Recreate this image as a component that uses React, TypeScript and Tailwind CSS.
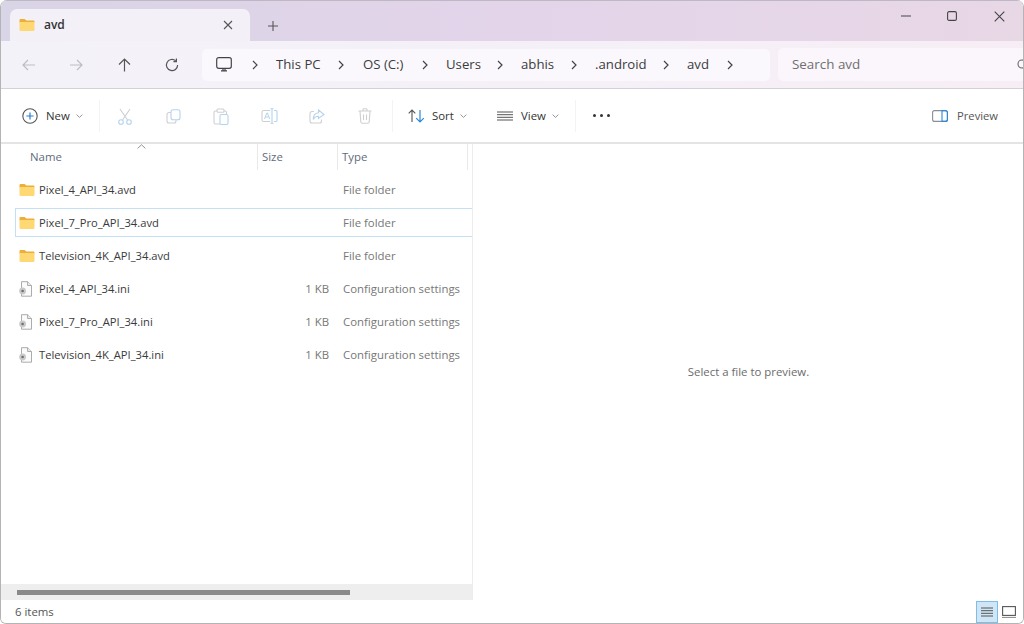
import React from "react";

const Folder = () => (
  <svg width="16" height="14" viewBox="0 0 16 14" className="shrink-0">
    <path d="M0.5 2.2C0.5 1.4 1 1 1.7 1H5.6L7.3 2.6H14.4C15.1 2.6 15.5 3 15.5 3.7V4.5H0.5Z" fill="#ecb03a" />
    <path d="M0.5 4H15.5V11.8C15.5 12.5 15.1 13 14.4 13H1.6C1 13 0.5 12.5 0.5 11.8Z" fill="#fdd873" />
  </svg>
);

const IniFile = () => (
  <svg width="15" height="16" viewBox="0 0 15 16" className="shrink-0 -ml-px">
    <path d="M3.5 0.7H9.6L13.5 4.5V15.2H3.5Z" fill="#fbfbfb" stroke="#a3a3a3" strokeWidth="0.9" />
    <path d="M9.6 0.7V4.5H13.5" fill="#eee" stroke="#a3a3a3" strokeWidth="0.9" />
    <circle cx="4.6" cy="10" r="3.4" fill="#c9c9c9" />
    <circle cx="4.6" cy="10" r="1.3" fill="#6e6e6e" />
  </svg>
);

const Chevron = () => (
  <svg width="6" height="10" viewBox="0 0 6 10" className="shrink-0">
    <path d="M1 1l4 4-4 4" fill="none" stroke="#444" strokeWidth="1.2" />
  </svg>
);

const Caret = () => (
  <svg width="7" height="4" viewBox="0 0 7 4" className="shrink-0">
    <path d="M0.6 0.6L3.5 3.4 6.4 0.6" fill="none" stroke="#888" strokeWidth="0.9" />
  </svg>
);

const Sep = () => <div className="w-px h-[32px] bg-[#f3f3f3] shrink-0" />;

const ToolSlot = ({ children }: { children: React.ReactNode }) => (
  <div className="w-[48px] h-full flex items-center justify-center shrink-0">{children}</div>
);

const G = "#cfcfcf";
const B = "#b3d4ee";

const Crumb = ({ label, w }: { label: string; w: string }) => (
  <div className={`flex items-center shrink-0 ${w}`}>
    <span className="text-[13.2px] text-[#3c3c3c] whitespace-nowrap">{label}</span>
  </div>
);

const rows = [
  { name: "Pixel_4_API_34.avd", size: "", type: "File folder", folder: true },
  { name: "Pixel_7_Pro_API_34.avd", size: "", type: "File folder", folder: true, sel: true },
  { name: "Television_4K_API_34.avd", size: "", type: "File folder", folder: true },
  { name: "Pixel_4_API_34.ini", size: "1 KB", type: "Configuration settings" },
  { name: "Pixel_7_Pro_API_34.ini", size: "1 KB", type: "Configuration settings" },
  { name: "Television_4K_API_34.ini", size: "1 KB", type: "Configuration settings" },
];

export default function App() {
  return (
    <div className="w-[1024px] h-[624px] flex flex-col overflow-hidden bg-white border-l border-r border-b border-[#b4b4b4] rounded-t-[7px] rounded-b-[6px] font-['Open_Sans',sans-serif] text-[11.4px] leading-none">
      {/* Title bar */}
      <div className="h-[41px] shrink-0 flex bg-linear-to-r from-[#d9d4e6] via-[#e3d4ea] to-[#e8d8e6] border-t border-[#bdb8c4]">
        <div className="ml-[9px] mt-[8px] w-[240px] h-[32px] bg-[#f3f0f8] rounded-t-[7px] flex items-center">
          <div className="ml-[9px]"><Folder /></div>
          <span className="ml-[9px] w-[21px] text-[12px] font-semibold text-[#333]">avd</span>
          <svg width="10" height="10" viewBox="0 0 10 10" className="ml-[158px]">
            <path d="M1 1l8 8M9 1l-8 8" stroke="#555" strokeWidth="1.1" />
          </svg>
        </div>
        <svg width="10" height="10" viewBox="0 0 10 10" className="ml-[18px] mt-[20px]">
          <path d="M5 0v10M0 5h10" stroke="#555" strokeWidth="1.1" />
        </svg>
        <div className="ml-auto mt-[10px] flex items-start">
          <svg width="10" height="10" viewBox="0 0 10 10">
            <path d="M0 5h10" stroke="#555" strokeWidth="1.1" />
          </svg>
          <svg width="10" height="10" viewBox="0 0 10 10" className="ml-[36px]">
            <rect x="0.6" y="0.6" width="8.8" height="8.8" rx="1.5" fill="none" stroke="#444" strokeWidth="1.1" />
          </svg>
          <svg width="11" height="11" viewBox="0 0 11 11" className="ml-[37px] mr-[18px]">
            <path d="M0.7 0.7l9.6 9.6M10.3 0.7l-9.6 9.6" stroke="#444" strokeWidth="1.1" />
          </svg>
        </div>
      </div>

      {/* Navigation bar */}
      <div className="h-[48px] shrink-0 flex items-center bg-linear-to-r from-[#f4f2f9] via-[#f5f0f8] to-[#f7eef5] border-b border-[#d4d2d6]">
        <div className="w-[201px] shrink-0 flex items-center">
          <svg width="14" height="12" viewBox="0 0 14 12" className="ml-[21px]">
            <path d="M13 6H1M6 1L1 6l5 5" fill="none" stroke="#bdbdc4" strokeWidth="1.2" />
          </svg>
          <svg width="14" height="12" viewBox="0 0 14 12" className="ml-[33px]">
            <path d="M1 6h12M8 1l5 5-5 5" fill="none" stroke="#bdbdc4" strokeWidth="1.2" />
          </svg>
          <svg width="13" height="14" viewBox="0 0 13 14" className="ml-[35px]">
            <path d="M6.5 13.5V1M1 6.5L6.5 1 12 6.5" fill="none" stroke="#555" strokeWidth="1.2" />
          </svg>
          <svg width="14" height="14" viewBox="0 0 14 14" className="ml-[34px]">
            <path d="M12.6 7A5.6 5.6 0 1 1 10.7 2.8" fill="none" stroke="#555" strokeWidth="1.2" />
            <path d="M11.4 0.6V3.6H8.4" fill="none" stroke="#555" strokeWidth="1.2" />
          </svg>
        </div>
        <div className="w-[568px] h-[32px] shrink-0 bg-[#faf8fc] rounded-[5px] flex items-center">
          <svg width="16" height="15" viewBox="0 0 16 15" className="ml-[14px] shrink-0">
            <rect x="0.7" y="0.7" width="14.6" height="10.6" rx="2" fill="none" stroke="#444" strokeWidth="1.2" />
            <path d="M5 13.8h6M7 11.5v2M9 11.5v2" stroke="#444" strokeWidth="1.2" />
          </svg>
          <div className="ml-[20px]"><Chevron /></div>
          <div className="ml-[18px] w-[45px]"><Crumb label="This PC" w="w-[45px]" /></div>
          <div className="ml-[17px]"><Chevron /></div>
          <div className="ml-[19px]"><Crumb label="OS (C:)" w="w-[42px]" /></div>
          <div className="ml-[17px]"><Chevron /></div>
          <div className="ml-[18px]"><Crumb label="Users" w="w-[34px]" /></div>
          <div className="ml-[17px]"><Chevron /></div>
          <div className="ml-[18px]"><Crumb label="abhis" w="w-[33px]" /></div>
          <div className="ml-[17px]"><Chevron /></div>
          <div className="ml-[18px]"><Crumb label=".android" w="w-[51px]" /></div>
          <div className="ml-[17px]"><Chevron /></div>
          <div className="ml-[18px]"><Crumb label="avd" w="w-[22px]" /></div>
          <div className="ml-[18px]"><Chevron /></div>
        </div>
        <div className="ml-[8px] flex-1 h-[33px] bg-[#faf6fb] rounded-l-[5px] flex items-center overflow-hidden">
          <span className="ml-[14px] text-[13.4px] text-[#6f6f6f]">Search avd</span>
          <svg width="12" height="12" viewBox="0 0 12 12" className="ml-auto -mr-[6px]">
            <circle cx="5" cy="5" r="4" fill="none" stroke="#666" strokeWidth="1.1" />
          </svg>
        </div>
      </div>

      {/* Command bar */}
      <div className="h-[53px] shrink-0 flex items-center bg-white pt-[1px]">
        <svg width="16" height="16" viewBox="0 0 16 16" className="ml-[21px] shrink-0">
          <circle cx="8" cy="8" r="7.2" fill="none" stroke="#555" strokeWidth="1.1" />
          <path d="M8 4.4v7.2M4.4 8h7.2" stroke="#2b7fd4" strokeWidth="1.2" />
        </svg>
        <span className="ml-[8px] w-[25px] text-[#333]">New</span>
        <div className="ml-[5px]"><Caret /></div>
        <div className="ml-[16px]"><Sep /></div>
        <div className="ml-[1px] h-full flex items-center">
          <ToolSlot>
            <svg width="16" height="17" viewBox="0 0 16 17">
              <path d="M3 1l7.5 11M13 1L5.5 12" fill="none" stroke={G} strokeWidth="1.1" />
              <circle cx="4" cy="14" r="2.3" fill="none" stroke={B} strokeWidth="1.1" />
              <circle cx="12" cy="14" r="2.3" fill="none" stroke={B} strokeWidth="1.1" />
            </svg>
          </ToolSlot>
          <ToolSlot>
            <svg width="15" height="15" viewBox="0 0 15 15">
              <rect x="5" y="0.7" width="9" height="10" rx="2" fill="none" stroke={B} strokeWidth="1.1" />
              <path d="M5 3.5H3A2 2 0 0 0 1 5.5V12a2 2 0 0 0 2 2h5a2 2 0 0 0 2-2v-1" fill="none" stroke={G} strokeWidth="1.1" />
            </svg>
          </ToolSlot>
          <ToolSlot>
            <svg width="16" height="17" viewBox="0 0 16 17">
              <path d="M4 3H2.5A1.5 1.5 0 0 0 1 4.5v10A1.5 1.5 0 0 0 2.5 16H7" fill="none" stroke={G} strokeWidth="1.1" />
              <path d="M11 3h1a1.5 1.5 0 0 1 1.5 1.5V6" fill="none" stroke={G} strokeWidth="1.1" />
              <rect x="4" y="1" width="7" height="3.2" rx="1" fill="none" stroke={G} strokeWidth="1.1" />
              <rect x="7" y="6.5" width="8" height="10" rx="1.5" fill="none" stroke={B} strokeWidth="1.1" />
            </svg>
          </ToolSlot>
          <ToolSlot>
            <svg width="17" height="16" viewBox="0 0 17 16">
              <path d="M9 2.5H2.5A1.5 1.5 0 0 0 1 4v8a1.5 1.5 0 0 0 1.5 1.5H9" fill="none" stroke={G} strokeWidth="1.1" />
              <path d="M13 2.5h2A1.2 1.2 0 0 1 16 4v8a1.2 1.2 0 0 1-1 1.5h-2M11 0.7v14.6M9.5 0.7h3M9.5 15.3h3" fill="none" stroke={B} strokeWidth="1.1" />
              <path d="M3.5 11L5.8 5h.6L8.7 11M4.5 9h3.2" fill="none" stroke={B} strokeWidth="1" />
            </svg>
          </ToolSlot>
          <ToolSlot>
            <svg width="16" height="15" viewBox="0 0 16 15">
              <path d="M5 2.5H3A2 2 0 0 0 1 4.5V12a2 2 0 0 0 2 2h7.5a2 2 0 0 0 2-2v-1.5" fill="none" stroke={G} strokeWidth="1.1" />
              <path d="M9.5 1L15 5.5 9.5 9.5V7.2C7 7.2 5.3 8.2 4.3 10.5 4.3 6.5 6.3 4 9.5 3.7Z" fill="none" stroke={B} strokeWidth="1.1" />
            </svg>
          </ToolSlot>
          <ToolSlot>
            <svg width="14" height="16" viewBox="0 0 14 16">
              <path d="M0.5 3h13M5 3V1.6A1 1 0 0 1 6 .7h2a1 1 0 0 1 1 .9V3M2 3l.8 11a1.5 1.5 0 0 0 1.5 1.3h5.4a1.5 1.5 0 0 0 1.5-1.3L12 3M5.5 6.5v5.5M8.5 6.5v5.5" fill="none" stroke={G} strokeWidth="1.1" />
            </svg>
          </ToolSlot>
        </div>
        <div className="ml-[3px]"><Sep /></div>
        <svg width="17" height="14" viewBox="0 0 17 14" className="ml-[15px] shrink-0">
          <path d="M4 13V1M0.7 4.3L4 1l3.3 3.3" fill="none" stroke="#555" strokeWidth="1.1" />
          <path d="M12 1v12M8.2 9.2L12 13l3.8-3.8" fill="none" stroke="#2b87d8" strokeWidth="1.2" />
        </svg>
        <span className="ml-[7px] w-[22px] text-[#333]">Sort</span>
        <div className="ml-[6px]"><Caret /></div>
        <svg width="16" height="10" viewBox="0 0 16 10" className="ml-[30px] shrink-0">
          <path d="M0 1h16M0 3.7h16M0 6.3h16M0 9h16" stroke="#555" strokeWidth="1" />
        </svg>
        <span className="ml-[8px] w-[26px] text-[#333]">View</span>
        <div className="ml-[5px]"><Caret /></div>
        <div className="ml-[16px]"><Sep /></div>
        <div className="ml-[17px] -mt-[1px] flex gap-[4px]">
          <div className="w-[3px] h-[3px] rounded-full bg-[#333]" />
          <div className="w-[3px] h-[3px] rounded-full bg-[#333]" />
          <div className="w-[3px] h-[3px] rounded-full bg-[#333]" />
        </div>
        <svg width="16" height="12" viewBox="0 0 16 12" className="ml-auto shrink-0">
          <rect x="0.6" y="0.6" width="14.8" height="10.8" rx="2" fill="none" stroke="#8a8f96" strokeWidth="1.1" />
          <path d="M10 0.6h3.4a2 2 0 0 1 2 2v6.8a2 2 0 0 1-2 2H10Z" fill="none" stroke="#2b87d8" strokeWidth="1.1" />
        </svg>
        <span className="ml-[9px] mr-[25px] text-[11.2px] text-[#555]">Preview</span>
      </div>

      {/* Body */}
      <div className="flex-1 min-h-0 flex border-t-2 border-[#e6e3e6]">
        <div className="w-[472px] shrink-0 flex flex-col border-r border-[#ececec]">
          <div className="relative h-[26px] shrink-0 flex items-center text-[#5f6b7d]">
            <svg width="9" height="5" viewBox="0 0 9 5" className="absolute left-[136px] top-0">
              <path d="M0.6 4.4L4.5 0.8 8.4 4.4" fill="none" stroke="#888" strokeWidth="0.9" />
            </svg>
            <div className="w-[257px] h-full flex items-center pl-[29px] border-r border-[#e9e9e9]">Name</div>
            <div className="w-[80px] h-full flex items-center pl-[4px] border-r border-[#e9e9e9]">Size</div>
            <div className="w-[130px] h-full flex items-center pl-[4px] border-r border-[#e9e9e9]">Type</div>
          </div>
          <div className="flex flex-col flex-1 min-h-0 pt-[3px]">
            {rows.map((r) => (
              <div key={r.name} className="h-[33px] shrink-0 flex items-center">
                <div className={`w-full h-[29px] flex items-center ml-[14px] border-t border-b border-l ${r.sel ? "border-[#c4e0f4]" : "border-transparent"}`}>
                  <div className="w-[23px] flex justify-start pl-[3px] shrink-0">
                    {r.folder ? <Folder /> : <IniFile />}
                  </div>
                  <div className="w-[234px] text-[11.2px] text-[#3a3a3a] whitespace-nowrap">{r.name}</div>
                  <div className="w-[56px] text-right text-[#777] shrink-0">{r.size}</div>
                  <div className="ml-[14px] text-[#777] whitespace-nowrap">{r.type}</div>
                </div>
              </div>
            ))}
          </div>
          <div className="h-[16px] shrink-0 bg-[#eeeeee] flex items-center pl-[16px]">
            <div className="w-[333px] h-[5px] bg-[#8a8a8a]" />
          </div>
        </div>
        <div className="flex-1 flex items-center justify-center pl-[1px] text-[#6b6b6b]">
          Select a file to preview.
        </div>
      </div>

      {/* Status bar */}
      <div className="h-[23px] shrink-0 flex items-center bg-white">
        <span className="ml-[14px] text-[#555]">6 items</span>
        <div className="ml-auto w-[22px] h-[22px] bg-[#cfe6f7] border border-[#7fbde8] flex items-center justify-center">
          <svg width="12" height="10" viewBox="0 0 12 10">
            <path d="M0 1h12M0 3.7h12M0 6.3h12M0 9h12" stroke="#555" strokeWidth="1" />
          </svg>
        </div>
        <svg width="14" height="12" viewBox="0 0 14 12" className="ml-[4px] mr-[7px]">
          <rect x="0.6" y="0.6" width="12.8" height="8.8" fill="none" stroke="#555" strokeWidth="1.1" />
          <path d="M0 11.4h14" stroke="#888" strokeWidth="1" />
        </svg>
      </div>
    </div>
  );
}
